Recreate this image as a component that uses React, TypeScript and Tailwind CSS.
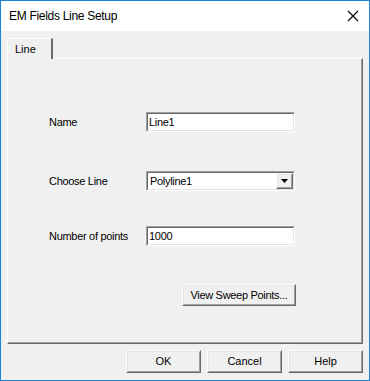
import React from "react";

function Sunken({ children, className = "" }: { children: React.ReactNode; className?: string }) {
  return (
    <div className={"border border-t-[#a0a0a0] border-l-[#a0a0a0] border-b-white border-r-white " + className}>
      <div className="h-full border border-t-[#696969] border-l-[#696969] border-b-[#e3e3e3] border-r-[#e3e3e3] bg-white flex items-center">
        {children}
      </div>
    </div>
  );
}

function Raised({ children, className = "" }: { children: React.ReactNode; className?: string }) {
  return (
    <div className={"border border-t-white border-l-white border-b-[#696969] border-r-[#696969] " + className}>
      <div className="h-full border border-t-[#e3e3e3] border-l-[#e3e3e3] border-b-[#a0a0a0] border-r-[#a0a0a0] bg-[#f0f0f0] flex items-center justify-center">
        {children}
      </div>
    </div>
  );
}

export default function App() {
  return (
    <div
      className="w-[370px] h-[381px] border border-[#1883d7] flex flex-col bg-[#f0f0f0] text-black"
      style={{ fontFamily: '"Liberation Sans", Arial, sans-serif' }}
    >
      <div className="h-[30px] bg-white flex items-center justify-between pl-[8px] pr-[10px] shrink-0">
        <span className="text-[12px] tracking-[-0.3px] leading-none">EM Fields Line Setup</span>
        <svg width="12" height="12" viewBox="0 0 12 12" className="mr-[0px]">
          <path d="M1 1 L11 11 M11 1 L1 11" stroke="#000" strokeWidth="1.1" fill="none" />
        </svg>
      </div>
      <div className="flex-1 flex flex-col px-[6px] pt-[7px]">
        <div className="flex">
          <div className="relative z-10 -mb-px w-[46px] h-[21px] bg-[#f0f0f0] border-t border-l border-t-white border-l-white border-r-2 border-r-[#696969] pl-[7px] pt-[3px] text-[11px] leading-[14px]">
            Line
          </div>
        </div>
        <div className="h-[286px] border-t border-l border-t-white border-l-white border-r border-b border-r-[#696969] border-b-[#696969]">
          <div className="h-full border-r border-b border-r-[#a0a0a0] border-b-[#a0a0a0] flex flex-col pl-[41px] pt-[53px] text-[11px]">
            <div className="flex items-center h-[20px]">
              <span className="w-[97px] tracking-[-0.3px]">Name</span>
              <Sunken className="w-[149px] h-[20px]">
                <span className="pl-[1px] tracking-[-0.3px]">Line1</span>
              </Sunken>
            </div>
            <div className="flex items-center h-[20px] mt-[39px]">
              <span className="w-[97px] tracking-[-0.3px]">Choose Line</span>
              <Sunken className="w-[149px] h-[20px]">
                <span className="pl-[2px] flex-1 tracking-[-0.3px]">Polyline1</span>
                <Raised className="w-[17px] h-[16px]">
                  <svg width="7" height="4" viewBox="0 0 7 4">
                    <path d="M0 0 H7 L3.5 4 Z" fill="#000" />
                  </svg>
                </Raised>
              </Sunken>
            </div>
            <div className="flex items-center h-[20px] mt-[35px]">
              <span className="w-[97px] tracking-[-0.3px]">Number of points</span>
              <Sunken className="w-[149px] h-[20px]">
                <span className="pl-[1px] tracking-[-0.3px]">1000</span>
              </Sunken>
            </div>
            <div className="flex mt-[38px] pl-[133px]">
              <Raised className="w-[114px] h-[22px]">
                <span className="tracking-[-0.3px]">View Sweep Points...</span>
              </Raised>
            </div>
          </div>
        </div>
        <div className="flex justify-end gap-[6px] mt-[6px] text-[11px]">
          <Raised className="w-[75px] h-[23px]">OK</Raised>
          <Raised className="w-[75px] h-[23px]">Cancel</Raised>
          <Raised className="w-[75px] h-[23px]">Help</Raised>
        </div>
      </div>
    </div>
  );
}
